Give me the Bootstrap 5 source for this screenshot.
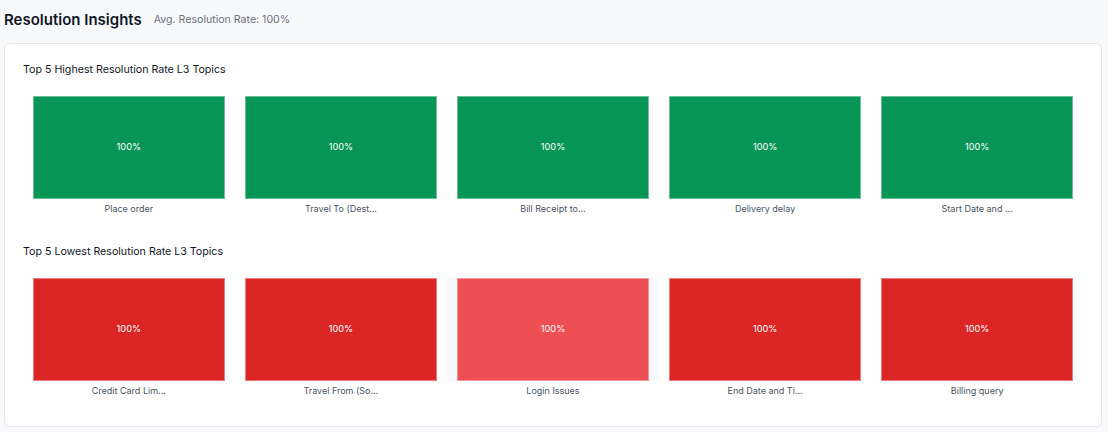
<!DOCTYPE html>
<html lang="en">

<head>
    <meta charset="UTF-8">
    <meta name="viewport" content="width=device-width, initial-scale=1.0">
    <title>Resolution Insights</title>
    <link rel="stylesheet" href="https://cdn.jsdelivr.net/npm/bootstrap@5.3.0/dist/css/bootstrap.min.css">
    <style>
        body {
            background-color: #f8f9fb;
            color: #111827;
            font-family: Inter, "Liberation Sans", sans-serif;
        }

        .page {
            padding: 9px 6px 0 4px;
        }

        .page-title {
            font-size: 15px;
            font-weight: 600;
            line-height: 22px;
            color: #111827;
        }

        .page-sub {
            margin-left: 4px;
            font-size: 10.6px;
            color: #6b7280;
        }

        .insights-card {
            margin-top: 12px;
            height: 384px;
            padding: 19px 18px 0;
            border: 1px solid #e5e7eb;
            border-radius: 6px;
        }

        .section-title {
            font-size: 10.65px;
            font-weight: 400;
            line-height: 14px;
            color: #111827;
            margin-bottom: 19px;
        }

        .section + .section {
            margin-top: 30px;
        }

        .tile-row {
            padding: 0 10px;
            gap: 20.5px;
        }

        .tile {
            flex: 1 1 0;
            min-width: 0;
        }

        .tile-box {
            height: 103px;
            padding-bottom: 2px;
            border: 1px solid rgba(255, 255, 255, .4);
            font-size: 9.2px;
            font-weight: 400;
            color: #fff;
        }

        .tile-label {
            margin-top: 4px;
            font-size: 9px;
            line-height: 12px;
            color: #4b5563;
        }

        .bg-high {
            background-color: #089656;
        }

        .bg-low {
            background-color: #dc2626;
        }

        .bg-low-hover {
            background-color: #ee4f53;
            box-shadow: -10px 0 0 #f8f9fd, 10px 0 0 #f8f9fd;
        }
    </style>
</head>

<body>
    <div class="page">
        <div class="d-flex align-items-center gap-2">
            <span class="page-title">Resolution Insights</span>
            <span class="page-sub">Avg. Resolution Rate: 100%</span>
        </div>

        <div class="card insights-card">
            <div class="section">
                <div class="section-title">Top 5 Highest Resolution Rate L3 Topics</div>
                <div class="d-flex tile-row">
                    <div class="tile text-center">
                        <div class="tile-box bg-high d-flex align-items-center justify-content-center">100%</div>
                        <div class="tile-label">Place order</div>
                    </div>
                    <div class="tile text-center">
                        <div class="tile-box bg-high d-flex align-items-center justify-content-center">100%</div>
                        <div class="tile-label">Travel To (Dest...</div>
                    </div>
                    <div class="tile text-center">
                        <div class="tile-box bg-high d-flex align-items-center justify-content-center">100%</div>
                        <div class="tile-label">Bill Receipt to...</div>
                    </div>
                    <div class="tile text-center">
                        <div class="tile-box bg-high d-flex align-items-center justify-content-center">100%</div>
                        <div class="tile-label">Delivery delay</div>
                    </div>
                    <div class="tile text-center">
                        <div class="tile-box bg-high d-flex align-items-center justify-content-center">100%</div>
                        <div class="tile-label">Start Date and ...</div>
                    </div>
                </div>
            </div>

            <div class="section">
                <div class="section-title">Top 5 Lowest Resolution Rate L3 Topics</div>
                <div class="d-flex tile-row">
                    <div class="tile text-center">
                        <div class="tile-box bg-low d-flex align-items-center justify-content-center">100%</div>
                        <div class="tile-label">Credit Card Lim...</div>
                    </div>
                    <div class="tile text-center">
                        <div class="tile-box bg-low d-flex align-items-center justify-content-center">100%</div>
                        <div class="tile-label">Travel From (So...</div>
                    </div>
                    <div class="tile text-center">
                        <div class="tile-box bg-low-hover d-flex align-items-center justify-content-center">100%</div>
                        <div class="tile-label">Login Issues</div>
                    </div>
                    <div class="tile text-center">
                        <div class="tile-box bg-low d-flex align-items-center justify-content-center">100%</div>
                        <div class="tile-label">End Date and Ti...</div>
                    </div>
                    <div class="tile text-center">
                        <div class="tile-box bg-low d-flex align-items-center justify-content-center">100%</div>
                        <div class="tile-label">Billing query</div>
                    </div>
                </div>
            </div>
        </div>
    </div>
    <script src="https://cdn.jsdelivr.net/npm/bootstrap@5.3.0/dist/js/bootstrap.bundle.min.js"></script>
</body>

</html>
